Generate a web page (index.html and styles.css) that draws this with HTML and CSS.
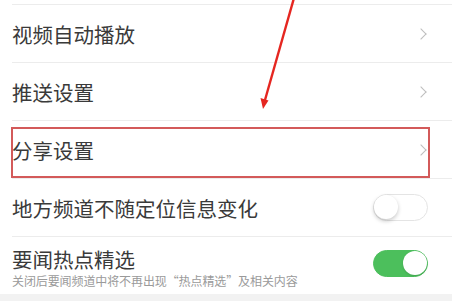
FILE: index.html
```html
<!DOCTYPE html>
<html lang="zh-CN">
  <head>
    <meta charset="UTF-8" />
    <meta name="viewport" content="width=device-width, initial-scale=1.0" />
    <title>设置</title>
    <link rel="stylesheet" href="styles.css">
  </head>
  <body>
    <div class="settings">
      <div class="settings__row">
        <span class="settings__label">视频自动播放</span>
        <span class="settings__chevron"></span>
      </div>
      <div class="settings__row">
        <span class="settings__label">推送设置</span>
        <span class="settings__chevron"></span>
      </div>
      <div class="settings__row settings__row--marked">
        <span class="settings__label">分享设置</span>
        <span class="settings__chevron"></span>
        <div class="mark-box"></div>
      </div>
      <div class="settings__row">
        <span class="settings__label">地方频道不随定位信息变化</span>
        <span class="switch"></span>
      </div>
      <div class="settings__row settings__row--tall">
        <div class="settings__text">
          <span class="settings__label settings__label--tight">要闻热点精选</span>
          <span class="settings__hint">关闭后要闻频道中将不再出现“热点精选”及相关内容</span>
        </div>
        <span class="switch switch--on"></span>
      </div>
    </div>
    <div class="footer-gap"></div>

    <!-- red annotation arrow -->
    <svg class="arrow" width="452" height="120" viewBox="0 0 452 120">
      <line x1="294" y1="-2" x2="265" y2="100" stroke="#e52620" stroke-width="2.4" />
      <polygon points="263,109 260.5,98 268.5,100.5" fill="#e52620" />
    </svg>
  </body>
</html>
```

FILE: styles.css
```css
body {
  font-family: "Noto Sans CJK SC", "Noto Sans", sans-serif;
  margin: 0;
  padding: 0;
  background-color: #f2f2f2;
  position: relative;
  width: 452px;
  height: 301px;
  overflow: hidden;
}

.settings {
  background-color: #fff;
  padding-top: 4px;
}

.settings__row {
  display: flex;
  align-items: center;
  justify-content: space-between;
  height: 58px;
  box-sizing: border-box;
  margin-left: 12px;
  padding-right: 26px;
  border-top: 1px solid #ececec;
  position: relative;
}

.settings__row--tall {
  height: 58px;
  align-items: flex-start;
}

.settings__label {
  font-size: 20.5px;
  color: #3a3a3a;
  line-height: 24px;
}

.settings__label--tight {
  line-height: 21px;
}

.settings__text {
  display: flex;
  flex-direction: column;
  padding-top: 12px;
}

.settings__hint {
  font-size: 12px;
  color: #9a9a9a;
  line-height: 14px;
  letter-spacing: -0.1px;
  margin-top: 4px;
}

.settings__chevron {
  width: 7px;
  height: 7px;
  border-top: 1.5px solid #bdbdbd;
  border-right: 1.5px solid #bdbdbd;
  transform: rotate(45deg);
  margin-right: 1px;
}

/* annotation box */
.mark-box {
  position: absolute;
  left: -1px;
  top: 6px;
  width: 419px;
  height: 51px;
  box-sizing: border-box;
  border: 2px solid #d35a5a;
}

.switch {
  width: 55px;
  height: 27px;
  box-sizing: border-box;
  border-radius: 14px;
  border: 1.5px solid #e4e4e4;
  background-color: #fff;
  position: relative;
  margin-right: -2px;
}

.switch::after {
  content: "";
  position: absolute;
  top: 0;
  left: 0;
  width: 24px;
  height: 24px;
  border-radius: 50%;
  background-color: #fff;
  box-shadow: 0 2px 4px rgba(0, 0, 0, 0.22);
}

.switch--on {
  background-color: #4cbf5c;
  border-color: #4cbf5c;
  margin-top: 13px;
}

.switch--on::after {
  left: auto;
  right: 0;
  box-shadow: 0 1px 2px rgba(0, 0, 0, 0.15);
}

.footer-gap {
  height: 8px;
}

.arrow {
  position: absolute;
  top: 0;
  left: 0;
}
```
